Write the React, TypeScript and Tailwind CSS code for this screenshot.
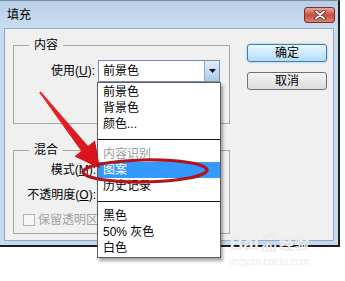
import React from "react";

const font = { fontFamily: '"Liberation Sans", "Noto Sans CJK SC", sans-serif' };

type Item = { label: string; kind?: "sep" | "disabled" | "active" };

const items: Item[] = [
  { label: "前景色" },
  { label: "背景色" },
  { label: "颜色..." },
  { label: "", kind: "sep" },
  { label: "内容识别", kind: "disabled" },
  { label: "图案", kind: "active" },
  { label: "历史记录" },
  { label: "", kind: "sep" },
  { label: "黑色" },
  { label: "50% 灰色" },
  { label: "白色" },
];

function CloseButton() {
  return (
    <div className="flex h-[16px] w-[31px] items-center justify-center rounded-[3px] border border-[#7a3026] bg-gradient-to-b from-[#e6a99c] via-[#c94c3e] to-[#d9806d]">
      <svg width="12" height="10" viewBox="0 0 12 10">
        <path d="M2 1.5 L10 8.5 M10 1.5 L2 8.5" stroke="#5a1b14" strokeWidth="3.4" strokeLinecap="round" />
        <path d="M2 1.5 L10 8.5 M10 1.5 L2 8.5" stroke="#ffffff" strokeWidth="2" strokeLinecap="round" />
      </svg>
    </div>
  );
}

function Overlay() {
  return (
    <svg className="pointer-events-none absolute left-0 top-0" width="345" height="281" viewBox="0 0 345 281">
      <defs>
        <linearGradient id="arr" x1="0" y1="0" x2="1" y2="1">
          <stop offset="0" stopColor="#f0262b" />
          <stop offset="1" stopColor="#d4101a" />
        </linearGradient>
      </defs>
      <polygon
        points="40.8,91.4 88,146 95,140.5 100,168.5 74.5,156.5 81.2,151 39.2,92.6"
        fill="url(#arr)"
      />
      <ellipse cx="145" cy="171" rx="62" ry="11" fill="none" stroke="#b3141c" strokeWidth="3.2" transform="rotate(-1 145 171)" />
    </svg>
  );
}

function Watermark() {
  return (
    <div className="pointer-events-none absolute left-[229px] top-[232px] flex flex-col items-center text-[#ececec]">
      <div className="flex items-end text-[19px] font-bold leading-[20px]">
        <span>Bai</span>
        <span className="flex flex-col items-center text-[13px] leading-[12px]">
          <svg width="20" height="10" viewBox="0 0 20 10">
            <circle cx="5" cy="6" r="2.2" fill="#ececec" />
            <circle cx="9" cy="3" r="2.2" fill="#ececec" />
            <circle cx="13" cy="3" r="2.2" fill="#ececec" />
            <circle cx="16" cy="6" r="2.2" fill="#ececec" />
          </svg>
          du
        </span>
        <span className="text-[15px]">经验</span>
      </div>
      <div className="mt-[3px] text-[10px] leading-[10px]">jingyan.baidu.com</div>
    </div>
  );
}

export default function App() {
  return (
    <div className="relative h-[281px] w-[345px] overflow-hidden bg-white text-[12px] text-black" style={font}>
      <div className="flex h-[247px] w-[340px] flex-col border-b-2 border-r-2 border-t border-[#1e1e1e] border-t-[#7c8da3] bg-[#c6d9ef]">
        <div className="flex h-[27px] items-center justify-between bg-gradient-to-b from-[#b8cee7] to-[#cbdcf0] pl-[7px] pr-[3px]">
          <span className="leading-[16px]">填充</span>
          <CloseButton />
        </div>
        <div className="flex flex-1 px-[4px] pb-[4px]">
          <div className="flex flex-1 border border-[#94abc7] bg-[#f0f0f0] pl-[8px]">
            <div className="flex w-[217px] flex-col">
              <fieldset className="mt-[8px] h-[87px] border border-[#a8a8a8]">
                <legend className="ml-[15px] px-[5px] leading-[16px]">内容</legend>
                <div className="mt-[7px] flex items-center">
                  <span className="w-[81px] text-right">
                    使用(<span className="underline">U</span>):
                  </span>
                  <div className="ml-[3px] flex h-[22px] w-[122px] items-center border border-[#7b8ea6] bg-white">
                    <span className="flex-1 pl-[4px]">前景色</span>
                    <div className="flex h-[20px] w-[15px] items-center justify-center border-l border-[#8aaed8] bg-gradient-to-b from-[#e3eefa] to-[#a9c9ea]">
                      <svg width="7" height="4" viewBox="0 0 7 4">
                        <path d="M0 0 H7 L3.5 4 Z" fill="#111" />
                      </svg>
                    </div>
                  </div>
                </div>
              </fieldset>
              <fieldset className="mt-[18px] h-[92px] border border-[#a8a8a8]">
                <legend className="ml-[15px] px-[5px] leading-[16px]">混合</legend>
                <div className="mt-[4px] flex h-[16px] items-center">
                  <span className="w-[82px] text-right">
                    模式(<span className="underline">M</span>):
                  </span>
                </div>
                <div className="mt-[9px] flex h-[16px] items-center">
                  <span className="w-[82px] text-right">
                    不透明度(<span className="underline">O</span>):
                  </span>
                </div>
                <div className="mt-[9px] flex h-[16px] items-center pl-[9px]">
                  <div className="h-[12px] w-[12px] border border-[#b4b4b4] bg-[#f6f6f6]" />
                  <span className="ml-[3px] text-[#a3a3a3]">保留透明区</span>
                </div>
              </fieldset>
            </div>
            <div className="ml-[17px] mt-[15px] flex w-[80px] flex-col gap-[10px]">
              <button className="h-[18px] rounded-[3px] border border-[#3c7fb1] bg-gradient-to-b from-[#eaf6fd] to-[#b3dcf5] leading-[16px] shadow-[0_0_2px_#5fb1e6]">
                确定
              </button>
              <button className="h-[18px] rounded-[3px] border border-[#707070] bg-gradient-to-b from-[#f4f4f4] to-[#dcdcdc] leading-[16px]">
                取消
              </button>
            </div>
          </div>
        </div>
      </div>

      <div className="absolute left-[97px] top-[82px] flex w-[124px] flex-col border border-[#5e5e5e] bg-white pt-[1px] pb-[1px] shadow-[2px_3px_3px_rgba(0,0,0,0.35)]">
        {items.map((it, i) =>
          it.kind === "sep" ? (
            <div key={i} className="flex h-[14px] items-center">
              <div className="h-[1px] w-full bg-[#111]" />
            </div>
          ) : (
            <div
              key={i}
              className={
                it.kind === "active"
                  ? "h-[16px] bg-[#3399ff] pl-[5px] leading-[16px] text-white"
                  : it.kind === "disabled"
                  ? "h-[16px] pl-[5px] leading-[16px] text-[#9a9a9a]"
                  : "h-[16px] pl-[5px] leading-[16px]"
              }
            >
              {it.label}
            </div>
          )
        )}
      </div>

      <Overlay />
      <Watermark />
    </div>
  );
}
